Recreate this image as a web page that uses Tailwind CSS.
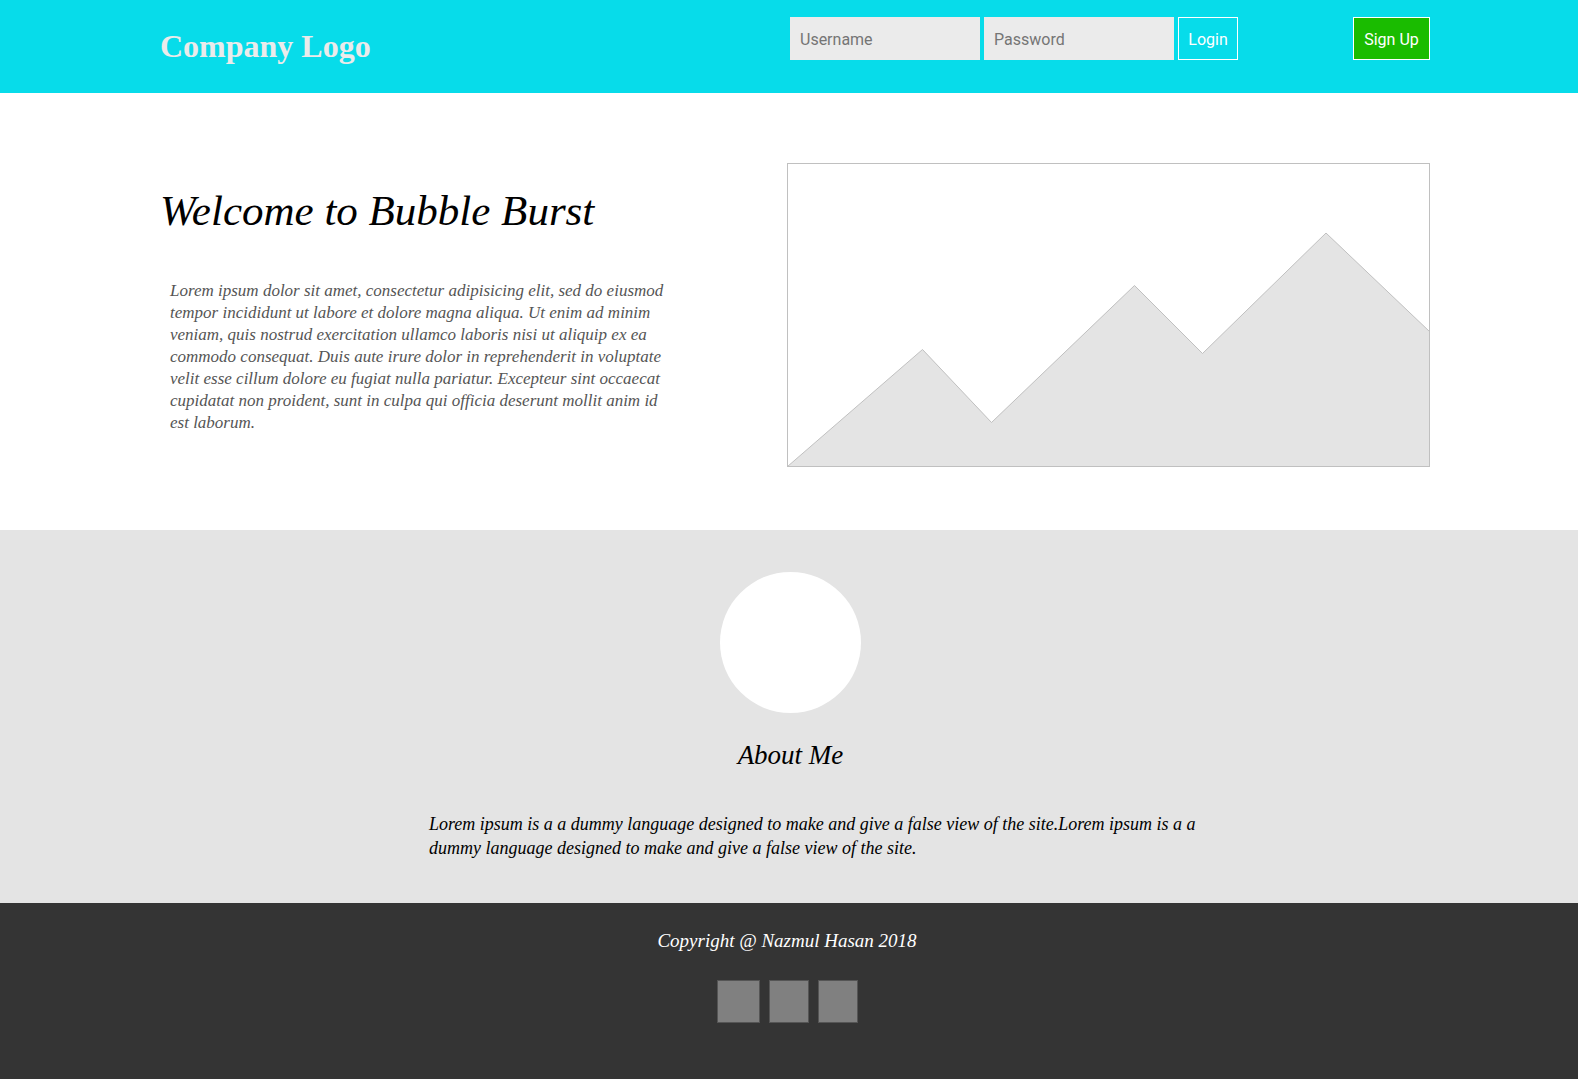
<!DOCTYPE html>
<html lang="en">
<head>
<meta charset="utf-8">
<meta name="viewport" content="width=device-width, initial-scale=1">
<title>Bubble Burst</title>
<script src="https://cdn.jsdelivr.net/npm/@tailwindcss/browser@4"></script>
</head>
<body class="bg-[#343434] font-['Liberation_Serif',serif] text-black">
  <header class="flex items-start justify-between bg-[#07dcea] pt-[17px] pr-[148px] pb-[31px] pl-40">
    <h1 class="pt-[13px] text-[32px] leading-[32px] font-bold whitespace-nowrap text-[#ebebeb]">Company Logo</h1>
    <div class="flex w-[640px] items-start justify-between font-[Roboto,sans-serif] text-base">
      <form class="flex gap-1">
        <input type="text" aria-label="Username" placeholder="Username" class="h-[43px] w-[190px] bg-[#ebebeb] px-[10px] pt-0.5 placeholder:text-[#757575]">
        <input type="password" aria-label="Password" placeholder="Password" class="h-[43px] w-[190px] bg-[#ebebeb] px-[10px] pt-0.5 placeholder:text-[#757575]">
        <button type="button" class="h-[43px] w-[60px] border border-white pt-0.5 text-white">Login</button>
      </form>
      <button type="button" class="h-[43px] w-[77px] border border-white bg-[#1abc00] pt-0.5 text-white">Sign Up</button>
    </div>
  </header>

  <main>
    <section class="flex items-start justify-between bg-white pt-[70px] pr-[148px] pb-[63px] pl-40">
      <div class="pt-6">
        <h2 class="text-[43px] leading-[48px] whitespace-nowrap italic">Welcome to Bubble Burst</h2>
        <p class="mt-[45px] pl-[10px] text-[17px] leading-[22px] whitespace-nowrap text-[#555555] italic">
          Lorem ipsum dolor sit amet, consectetur adipisicing elit, sed do eiusmod<br>
          tempor incididunt ut labore et dolore magna aliqua. Ut enim ad minim<br>
          veniam, quis nostrud exercitation ullamco laboris nisi ut aliquip ex ea<br>
          commodo consequat. Duis aute irure dolor in reprehenderit in voluptate<br>
          velit esse cillum dolore eu fugiat nulla pariatur. Excepteur sint occaecat<br>
          cupidatat non proident, sunt in culpa qui officia deserunt mollit anim id<br>
          est laborum.
        </p>
      </div>
      <svg class="w-[643px] shrink-0" viewBox="0 0 643 304" fill="none" stroke="#c0c0c0" role="img" aria-label="Mountain landscape">
        <path d="M.5 303.5 135.5 186.5 204.5 259.5 347.5 122.5 415.5 190.5 539 70 642.5 168.5V303.5Z" fill="#e4e4e4"/>
        <rect x=".5" y=".5" width="642" height="303"/>
      </svg>
    </section>

    <section class="bg-[#e4e4e4] pt-[42px] pb-[43px]">
      <div class="flex flex-col items-center pl-[3px]">
        <div class="size-[141px] rounded-full bg-white"></div>
        <h2 class="mt-[26px] text-[27px] leading-8 italic">About Me</h2>
      </div>
      <p class="mt-[41px] pl-[429px] text-[18px] leading-6 whitespace-nowrap italic">
        Lorem ipsum is a a dummy language designed to make and give a false view of the site.Lorem ipsum is a a<br>
        dummy language designed to make and give a false view of the site.
      </p>
    </section>
  </main>

  <footer class="flex flex-col items-center bg-[#343434] pt-[26px] pr-1 pb-14">
    <p class="text-[19px] leading-6 text-white italic">Copyright @ Nazmul Hasan 2018</p>
    <div class="mt-[27px] flex gap-[9px]">
      <a href="#" aria-label="Social link one" class="h-[43px] w-[43px] border border-[#555555] bg-[#808080]"></a>
      <a href="#" aria-label="Social link two" class="h-[43px] w-10 border border-[#555555] bg-[#808080]"></a>
      <a href="#" aria-label="Social link three" class="h-[43px] w-10 border border-[#555555] bg-[#808080]"></a>
    </div>
  </footer>
</body>
</html>
